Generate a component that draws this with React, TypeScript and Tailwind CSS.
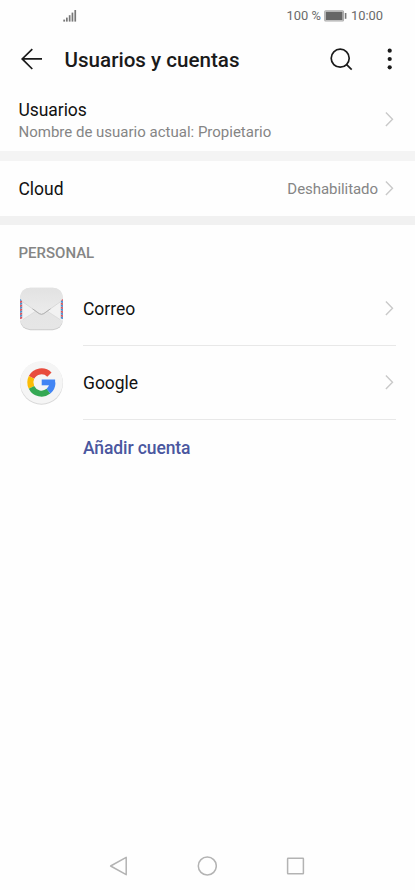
import type { ReactNode } from "react";

type AccountRowProps = {
  icon: ReactNode;
  name: string;
};

const Chevron = () => (
  <svg width="10" height="16" viewBox="0 0 10 16" fill="none" className="mb-px shrink-0">
    <path d="M0.9 1.6 7.5 8.3 0.9 15" stroke="#c9c9c9" strokeWidth="1.4" />
  </svg>
);

// #region status bar
const StatusBar = () => (
  <div className="flex h-[31px] items-center pl-[63px] pr-[32px] text-[#6a6a6a]">
    <svg width="14" height="12" viewBox="0 0 14 12" fill="#777777">
      <rect x="0.3" y="9.6" width="1.8" height="2" />
      <rect x="3" y="7.6" width="1.7" height="4" />
      <rect x="5.8" y="5.2" width="1.7" height="6.4" />
      <rect x="8.6" y="2.6" width="1.7" height="9" />
      <rect x="11.4" y="0" width="1.7" height="11.6" />
    </svg>
    <div className="ml-auto flex items-center text-[12.9px] leading-none">
      <span className="pt-px">100 %</span>
      <svg width="23" height="12" viewBox="0 0 23 12" className="ml-[3px] mr-[4px]">
        <rect x="0.7" y="0.7" width="18.8" height="10.2" rx="1" fill="none" stroke="#aaaaaa" strokeWidth="1.1" />
        <rect x="1.6" y="1.6" width="17" height="8.4" fill="#666666" />
        <rect x="20.8" y="3" width="1.6" height="5.8" fill="#777777" />
      </svg>
      <span className="pt-px">10:00</span>
    </div>
  </div>
);
// #endregion

// #region title bar
const Header = () => (
  <header className="flex h-[58px] items-center pl-5 pr-[22px]">
    <svg width="24" height="24" viewBox="0 0 24 24" fill="none" stroke="#1a1a1a" strokeWidth="1.7">
      <path d="M12.3 1.2 2.2 10.9 12.3 21M2.2 10.9H22" />
    </svg>
    <h1 className="ml-[20.5px] text-[20.6px] font-medium leading-none text-[#1a1a1a]">
      Usuarios y cuentas
    </h1>
    <svg width="24" height="24" viewBox="0 0 24 24" fill="none" stroke="#1a1a1a" strokeWidth="1.7" className="ml-auto">
      <circle cx="11.2" cy="10.2" r="9" />
      <path d="m17.4 16.4 5.3 5.2" />
    </svg>
    <svg width="6" height="24" viewBox="0 0 6 24" fill="#1a1a1a" className="ml-[34px]">
      <circle cx="2.7" cy="2.7" r="2.1" />
      <circle cx="2.7" cy="11" r="2.1" />
      <circle cx="2.7" cy="19.3" r="2.1" />
    </svg>
  </header>
);
// #endregion

// #region account icons
const STAMP_ROWS = [12.2, 16.2, 20.2, 24.2, 28.2];

const MailIcon = () => (
  <svg width="45" height="45" viewBox="0 0 45 45" className="mt-px">
    <defs>
      <linearGradient id="mailBody" x1="0" y1="0" x2="0" y2="1">
        <stop offset="0" stopColor="#e3e3e3" />
        <stop offset="1" stopColor="#e6e6e6" />
      </linearGradient>
      <linearGradient id="mailFlap" x1="0" y1="0" x2="0" y2="1">
        <stop offset="0" stopColor="#e2e2e2" />
        <stop offset="1" stopColor="#ececec" />
      </linearGradient>
    </defs>
    <rect x="1.2" y="1.8" width="42.6" height="41.4" rx="10" fill="#cccccc" />
    <rect x="1.2" y="0.8" width="42.6" height="41.4" rx="10" fill="url(#mailBody)" />
    <path d="M1.2 12 17 24 1.2 34ZM43.8 12 28 24 43.8 34Z" fill="#f2f2f2" />
    <path d="M4 32.5 17 24M41 32.5 28 24" fill="none" stroke="#d8d8d8" strokeWidth="0.7" />
    {STAMP_ROWS.map((y) => (
      <g key={y}>
        <path d={`M1 ${y + 2}l2.2-.6v1.9l-2.2.6z`} fill="#d9545c" />
        <path d={`M1 ${y}l2.2-.6v1.7l-2.2.6z`} fill="#4a90cc" />
        <path d={`M41.8 ${y - 0.5}l2.2.6v1.7l-2.2-.6z`} fill="#d9545c" />
        <path d={`M41.8 ${y + 1.4}l2.2.6v1.9l-2.2-.6z`} fill="#4a90cc" />
      </g>
    ))}
    <path
      d="M1.2 11C1.2 5 5 .8 11.2 .8H33.8C40 .8 43.8 5 43.8 11V12L24.7 27Q22.5 28.5 20.3 27L1.2 12Z"
      fill="url(#mailFlap)"
    />
    <path d="M4 15 20.2 26.6Q22.5 28.1 24.8 26.6L41 15" fill="none" stroke="#d3d3d3" strokeWidth="0.8" />
    <path d="M13.5 21.8 20.2 26.6Q22.5 28.1 24.8 26.6L31.5 21.8" fill="none" stroke="#b0b0b0" strokeWidth="1" />
  </svg>
);

const GoogleIcon = () => (
  <svg width="45" height="45" viewBox="0 0 45 45" className="mb-px">
    <circle cx="22.5" cy="23.2" r="21.5" fill="#d8d8d8" />
    <circle cx="22.5" cy="22.4" r="21.3" fill="#f5f5f5" />
    <g fill="none" strokeWidth="6">
      <path d="M30.4 14.6A11.2 11.2 0 0 0 12.5 17.4" stroke="#e84c3d" />
      <path d="M12.5 17.4A11.2 11.2 0 0 0 12.5 27.4" stroke="#fbbc05" />
      <path d="M12.5 27.4A11.2 11.2 0 0 0 29.5 31.2" stroke="#34a853" />
      <path d="M29.5 31.2A11.2 11.2 0 0 0 33.4 22.5" stroke="#4285f4" />
    </g>
    <path d="M22.7 19.5H36.1V25.3H22.7Z" fill="#4285f4" />
  </svg>
);
// #endregion

const AccountRow = ({ icon, name }: AccountRowProps) => (
  <div className="flex h-[74px] items-stretch pl-[19px] pr-[19px]">
    <div className="flex w-16 items-center">{icon}</div>
    <div className="flex grow items-center justify-between border-b border-[#e8e8e8] pr-px">
      <span className="pt-[2px] text-[17.5px] leading-none tracking-[-0.03px]">{name}</span>
      <Chevron />
    </div>
  </div>
);

const NavBar = () => (
  <nav className="mt-auto flex h-[48px] items-center justify-between pl-[108px] pr-[109px]">
    <svg width="20" height="20" viewBox="0 0 20 20" fill="none" stroke="#b3b3b3" strokeWidth="1.5" strokeLinejoin="round">
      <path d="M2.6 10 18.2 1.3V18.7Z" />
    </svg>
    <svg width="20" height="20" viewBox="0 0 20 20" fill="none" stroke="#b3b3b3" strokeWidth="1.5">
      <circle cx="10.3" cy="10" r="9" />
    </svg>
    <svg width="20" height="20" viewBox="0 0 20 20" fill="none" stroke="#b3b3b3" strokeWidth="1.5">
      <rect x="1.6" y="2.2" width="15.8" height="15.6" rx="0.5" />
    </svg>
  </nav>
);

const App = () => {
  return (
    <div className="flex h-[890px] w-[415px] flex-col bg-[#fefefe] font-['Roboto',sans-serif] text-[#111111]">
      <StatusBar />
      <Header />

      <div className="flex h-[62px] items-center justify-between pb-[2px] pl-[18.5px] pr-5">
        <div className="flex flex-col pt-[3px]">
          <span className="text-[17.5px] leading-[22px] tracking-[-0.07px]">Usuarios</span>
          <span className="text-[15px] leading-[22px] text-[#858585]">
            Nombre de usuario actual: Propietario
          </span>
        </div>
        <Chevron />
      </div>
      <div className="h-[10px] bg-[#f4f4f4]" />

      <div className="flex h-[55px] items-center pl-[18.5px] pr-5">
        <span className="pt-[2px] text-[17.5px] tracking-[-0.03px]">Cloud</span>
        <span className="ml-auto mr-[7px] pt-[2px] text-[15px] tracking-[-0.06px] text-[#858585]">
          Deshabilitado
        </span>
        <Chevron />
      </div>
      <div className="h-[9px] bg-[#f1f1f1]" />

      <div className="flex h-[47px] items-center pl-[18.5px] pt-[10px] text-[15px] font-medium text-[#858585]">
        PERSONAL
      </div>
      <AccountRow icon={<MailIcon />} name="Correo" />
      <AccountRow icon={<GoogleIcon />} name="Google" />
      <div className="flex h-14 items-center pl-[83px] text-[17.5px] font-medium tracking-[-0.1px] text-[#4a579f]">
        Añadir cuenta
      </div>

      <NavBar />
    </div>
  );
};

export default App;
